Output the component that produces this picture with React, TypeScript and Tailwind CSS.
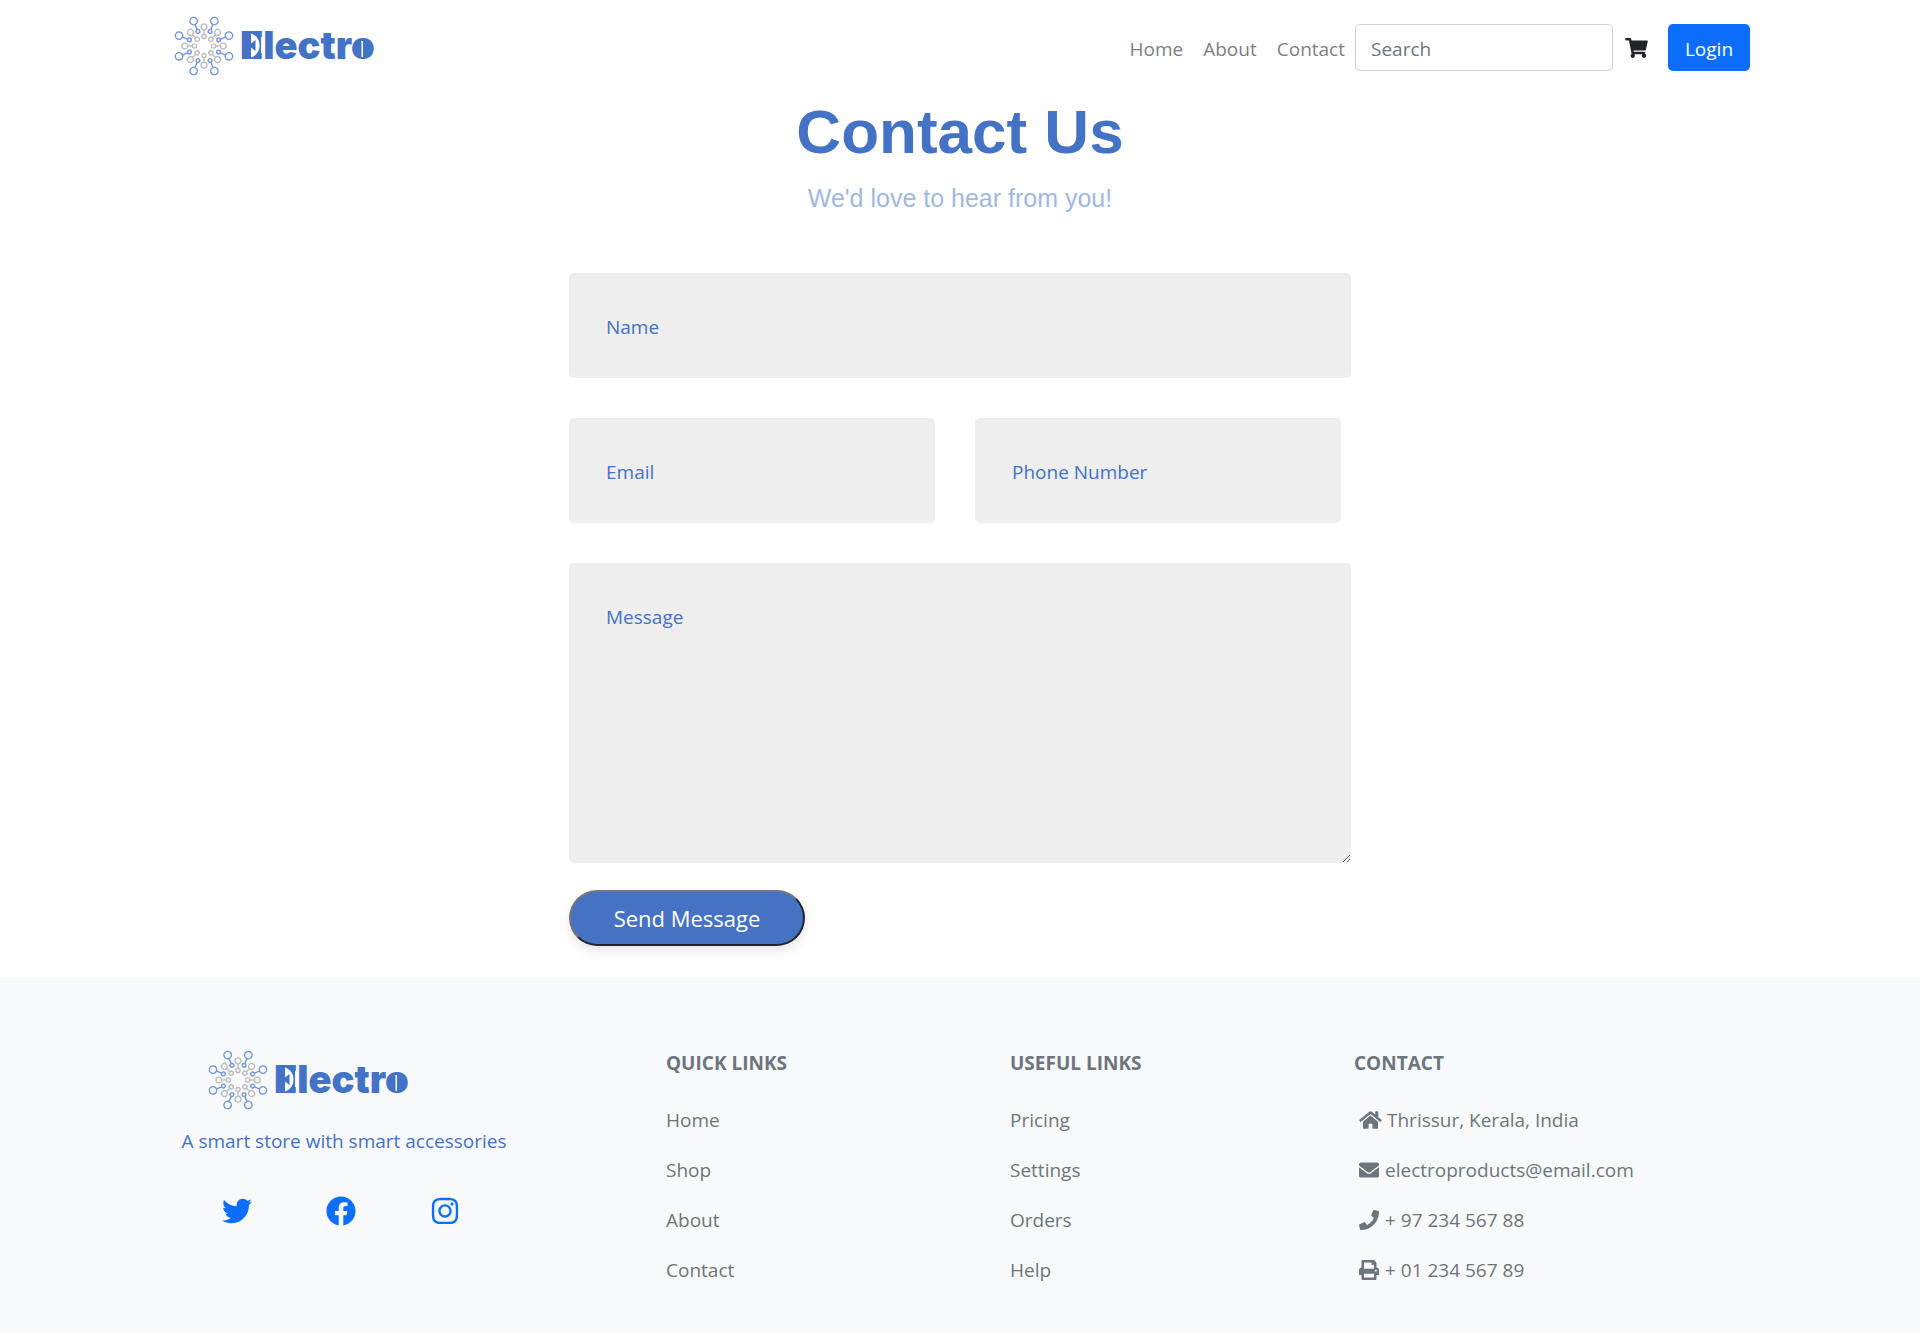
import { FaEnvelope, FaFacebook, FaHome, FaInstagram, FaPhone, FaPrint, FaShoppingCart, FaTwitter } from 'react-icons/fa';

const outerAngles = [22.5, 67.5, 112.5, 157.5, 202.5, 247.5, 292.5, 337.5];
const innerAngles = [0, 45, 90, 135, 180, 225, 270, 315];

function Logo({ cut }: { cut: string }) {
  return (
    <svg viewBox="0 0 204 64" className="h-16 w-[204px]" role="img" aria-label="Electro">
      <g fill="none" stroke="#bdbdbd" strokeWidth="1.4">
        {innerAngles.map((a) => (
          <g key={a} transform={`translate(30 32) rotate(${a})`}>
            <circle cx="0" cy="-19.2" r="2.9" />
            <circle cx="0" cy="-9.6" r="2.1" />
            <path d="M0-16.3v4.6" />
          </g>
        ))}
      </g>
      <g fill="none" stroke="#7396da" strokeWidth="1.4">
        {outerAngles.map((a) => (
          <g key={a} transform={`translate(30 32) rotate(${a})`}>
            <circle cx="0" cy="-27" r="3.7" />
            <circle cx="0" cy="-15.8" r="1.9" />
            <path d="M0-23.3v5.6" />
          </g>
        ))}
      </g>
      <text x="66" y="45" fill="#4472c4" className="font-['Inter'] text-[38px] font-black">
        Electro
      </text>
      {/* Stencil details over the wordmark: a lens in the first letter, a slit in the last. */}
      <rect x="75" y="20" width="12" height="23" fill="#4472c4" />
      <path d="M77 19.500C88.500 23 88.500 40 77 43.500V33.500L81.500 37V26L77 29.500Z" fill={cut} />
      <ellipse cx="188" cy="35" rx="6" ry="8" fill="#4472c4" />
      <rect x="187.500" y="27" width="1.500" height="16" fill={cut} />
    </svg>
  );
}

const fieldClass =
  'block w-full rounded-[5px] bg-[#eeeeee] px-[37px] text-[19px] text-[#4472c4] placeholder:text-[#4472c4] placeholder:opacity-100 outline-none';

function LinkColumn({ title, links }: { title: string; links: string[] }) {
  return (
    <div>
      <h2 className="mb-[27px] font-bold uppercase">{title}</h2>
      <ul className="flex flex-col gap-5">
        {links.map((link) => (
          <li key={link}>
            <a href="#">{link}</a>
          </li>
        ))}
      </ul>
    </div>
  );
}

export default function App() {
  return (
    <div className="flex min-h-screen flex-col bg-white font-['Open_Sans',sans-serif] text-[19px] leading-[30px] text-[#212529]">
      <header className="mx-auto flex w-full max-w-[1580px] items-center justify-between pt-[14px]">
        <a href="#" className="ml-1">
          <Logo cut="#ffffff" />
        </a>
        <div className="flex items-center pt-[3px]">
          <nav className="flex gap-5 pt-0.5 pr-2.5 text-[#7f7f7f]">
            <a href="#">Home</a>
            <a href="#">About</a>
            <a href="#">Contact</a>
          </nav>
          <input
            type="search"
            aria-label="Search"
            placeholder="Search"
            className="h-[47px] w-[258px] rounded-[5px] border border-[#ced4da] px-[15px] pt-0.5 placeholder:text-[#6c757d] outline-none"
          />
          <a href="#" aria-label="Cart" className="mx-3 flex w-[23px] justify-center">
            <FaShoppingCart className="h-5 w-[23px]" />
          </a>
          <button type="button" className="ml-2 h-[47px] w-[82px] rounded-[5px] bg-[#0d6efd] pt-0.5 text-white">
            Login
          </button>
        </div>
      </header>

      <main className="mx-auto w-full max-w-[782px] pb-[31px] text-[#4472c4]">
        <div className="text-center font-['Liberation_Sans',sans-serif]">
          <h1 className="pt-4 text-[62px] leading-[76px] font-bold">Contact Us</h1>
          <p className="mt-3 text-[25px] leading-[32px] opacity-50">We'd love to hear from you!</p>
        </div>
        <form className="mt-[59px]">
          <input type="text" aria-label="Name" placeholder="Name" className={`${fieldClass} h-[105px] pt-0.5`} />
          <div className="mt-10 mr-2.5 grid grid-cols-2 gap-10">
            <input type="email" aria-label="Email" placeholder="Email" className={`${fieldClass} h-[105px] pt-0.5`} />
            <input type="tel" aria-label="Phone Number" placeholder="Phone Number" className={`${fieldClass} h-[105px] pt-0.5`} />
          </div>
          <textarea
            aria-label="Message"
            placeholder="Message"
            className={`${fieldClass} mt-10 h-[300px] resize py-[39px]`}
          />
          <button
            type="submit"
            className="mt-[27px] h-[56px] w-[236px] rounded-full border-2 border-t-[#767676] border-r-[#212529] border-b-[#212529] border-l-[#767676] bg-[#4672c4] text-[22px] text-white shadow-[0_5px_12px_rgba(0,0,0,0.1)]"
          >
            Send Message
          </button>
        </form>
      </main>

      <footer className="flex-1 bg-[#f8f9fa] text-[#6c757d]">
        <div className="mx-auto grid w-full max-w-[1580px] grid-cols-[124fr_86fr_86fr_99fr] pt-[71px] pb-12">
          <div className="w-[348px] text-center">
            <a href="#" className="ml-[38px] block w-[204px]">
              <Logo cut="#f8f9fa" />
            </a>
            <p className="mt-3.5 text-[#4472c4]">A smart store with smart accessories</p>
            <div className="mt-10 flex gap-[74px] pl-[52px] text-[30px] text-[#0d6efd]">
              <a href="#" aria-label="Twitter">
                <FaTwitter />
              </a>
              <a href="#" aria-label="Facebook">
                <FaFacebook />
              </a>
              <a href="#" aria-label="Instagram">
                <FaInstagram />
              </a>
            </div>
          </div>
          <LinkColumn title="Quick Links" links={['Home', 'Shop', 'About', 'Contact']} />
          <LinkColumn title="Useful Links" links={['Pricing', 'Settings', 'Orders', 'Help']} />
          <div>
            <h2 className="mb-[27px] font-bold uppercase">Contact</h2>
            <address className="flex flex-col gap-5 pl-[5px] not-italic">
              <p className="flex items-center gap-[5px]">
                <FaHome className="h-5 w-[23px]" />
                Thrissur, Kerala, India
              </p>
              <p className="flex items-center gap-1.5">
                <FaEnvelope className="size-5" />
                electroproducts@email.com
              </p>
              <p className="flex items-center gap-1.5">
                <FaPhone className="size-5" />+ 97 234 567 88
              </p>
              <p className="flex items-center gap-1.5">
                <FaPrint className="size-5" />+ 01 234 567 89
              </p>
            </address>
          </div>
        </div>
      </footer>
    </div>
  );
}
